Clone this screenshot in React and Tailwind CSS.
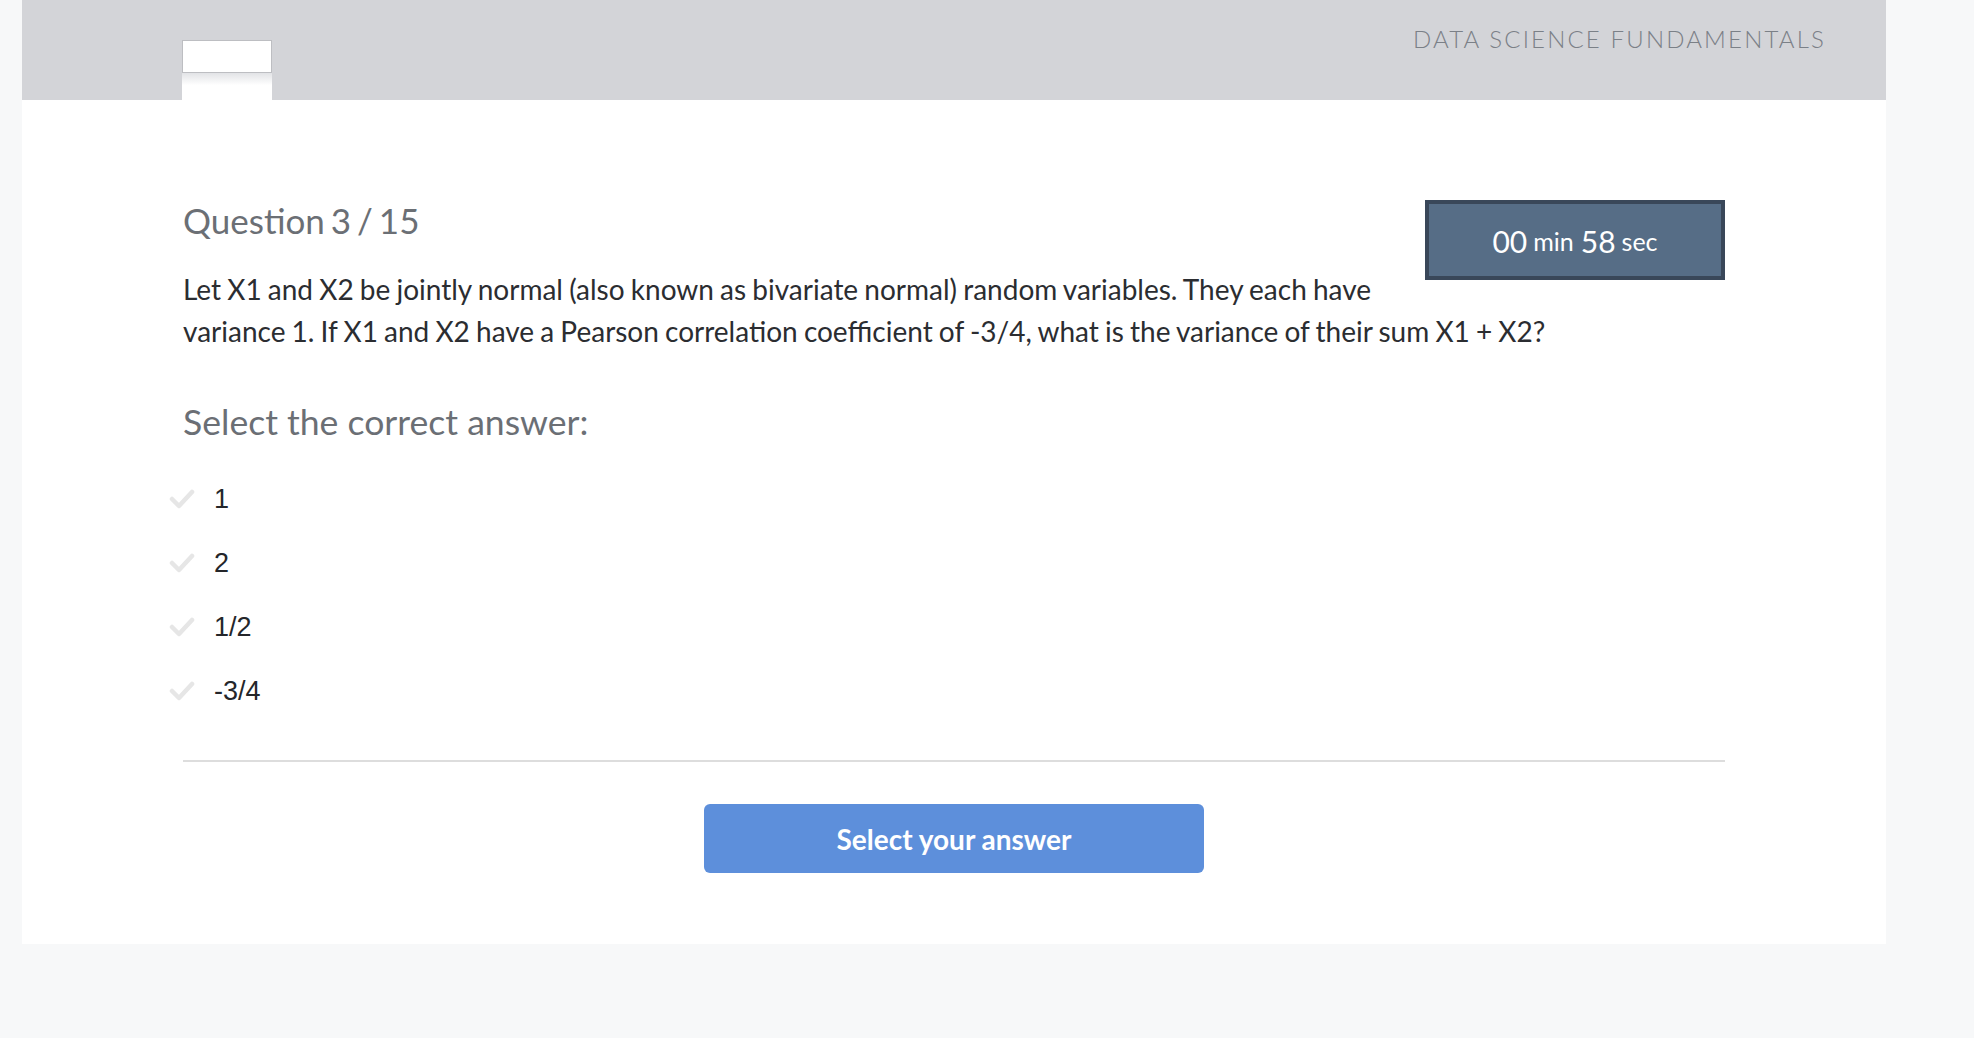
export default function App() {
  const options = ['1', '2', '1/2', '-3/4']

  const Check = () => (
    <svg width="26" height="20" viewBox="0 0 26 20" className="shrink-0">
      <polyline points="3,10 10,17 23,3" fill="none" stroke="#e6e6e6" strokeWidth="4.5" strokeLinecap="round" strokeLinejoin="round" />
    </svg>
  )

  return (
    <div className="min-h-screen w-full bg-[#f7f8f9] pl-[22px]" style={{ fontFamily: 'Lato, "Open Sans", sans-serif' }}>
      <div className="w-[1864px] bg-white">
        {/* Header */}
        <div className="h-[100px] bg-[#d3d4d8] flex justify-between items-start pl-[160px] pr-[60px]">
          <div className="flex flex-col mt-[40px] w-[90px]">
            <div className="h-[33px] bg-white border border-[#bdbec2]" />
            <div className="h-[27px] bg-linear-to-b from-[#e2e3e6] to-white to-[45%]" />
          </div>
          <div className="mt-[25px] text-[24px] leading-[28px] font-light tracking-[0.09em] text-[#7b8087]">
            DATA SCIENCE FUNDAMENTALS
          </div>
        </div>

        {/* Body */}
        <div className="px-[161px] pt-[100px] pb-[71px]">
          <div className="float-right w-[300px] h-[80px] pt-[3px] bg-[#566d86] border-4 border-[#394759] flex items-center justify-center text-white">
            <span className="text-[30px]">00</span>
            <span className="text-[25px] ml-[6px]">min</span>
            <span className="text-[30px] ml-[7px]">58</span>
            <span className="text-[25px] ml-[6px]">sec</span>
          </div>
          <h2 className="text-[35px] leading-[40px] text-[#6b6f75] [word-spacing:-3px]">Question 3 / 15</h2>
          <p className="mt-[28px] text-[28px] leading-[42px] text-[#2b2d31] [word-spacing:-1px]">
            Let X1 and X2 be jointly normal (also known as bivariate normal) random variables. They each have variance 1. If X1 and X2 have a Pearson correlation coefficient of -3/4, what is the variance of their sum X1 + X2?
          </p>
          <h3 className="mt-[50px] text-[35.6px] leading-[40px] text-[#6b6f75]">Select the correct answer:</h3>
          <div className="mt-[25px]">
            {options.map(o => (
              <div key={o} className="h-[64px] flex items-center -ml-[14px]">
                <Check />
                <span className="ml-[19px] text-[27px] text-[#24262a]" style={{ fontFamily: '"Liberation Sans", Arial, sans-serif' }}>{o}</span>
              </div>
            ))}
          </div>
          <div className="mt-[37px] h-[2px] bg-[#dddddd]" />
          <div className="mt-[42px] flex justify-center">
            <button className="w-[500px] h-[69px] rounded-[6px] bg-[#5d8fdb] text-white text-[28px] font-bold">
              Select your answer
            </button>
          </div>
        </div>
      </div>
    </div>
  )
}
